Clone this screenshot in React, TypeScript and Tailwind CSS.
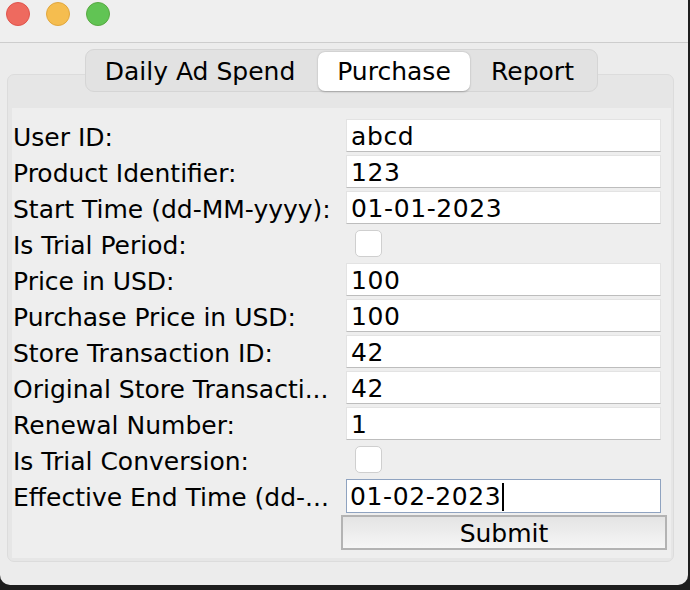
import React from "react";

const FONT = { fontFamily: '"DejaVu Sans", "Open Sans", sans-serif' };

type Row =
    | { label: string; kind: "text"; value: string; focused?: boolean }
    | { label: string; kind: "check" };

const rows: Row[] = [
    { label: "User ID:", kind: "text", value: "abcd" },
    { label: "Product Identifier:", kind: "text", value: "123" },
    { label: "Start Time (dd-MM-yyyy):", kind: "text", value: "01-01-2023" },
    { label: "Is Trial Period:", kind: "check" },
    { label: "Price in USD:", kind: "text", value: "100" },
    { label: "Purchase Price in USD:", kind: "text", value: "100" },
    { label: "Store Transaction ID:", kind: "text", value: "42" },
    { label: "Original Store Transacti...", kind: "text", value: "42" },
    { label: "Renewal Number:", kind: "text", value: "1" },
    { label: "Is Trial Conversion:", kind: "check" },
    { label: "Effective End Time (dd-...", kind: "text", value: "01-02-2023", focused: true },
];

function Field({ value, focused }: { value: string; focused?: boolean }) {
    if (focused) {
        return (
            <div className="flex h-[34px] w-[315px] items-center border-[1.5px] border-[#8fa3c0] bg-white pl-[3px] pt-[2px] text-[25px] leading-none tracking-[0.6px] text-black">
                <span>{value}</span>
                <span className="ml-[1px] h-[28px] w-[1.5px] bg-black" />
            </div>
        );
    }
    return (
        <div className="flex h-[33px] w-[315px] items-center border border-[#e3e3e3] border-b-[#bdbdbd] bg-white pl-[4px] pt-[2px] text-[25px] leading-none tracking-[0.6px] text-black">
            {value}
        </div>
    );
}

export default function App() {
    const tabs = ["Daily Ad Spend", "Purchase", "Report"];
    return (
        <div className="h-[590px] w-[690px] overflow-hidden bg-[#1e1e1e]" style={FONT}>
            <div className="flex h-[585px] w-[688px] flex-col rounded-b-[10px] bg-[#ececec]">
                {/* title bar */}
                <div className="flex h-[43px] shrink-0 items-start gap-[16px] border-b border-[#cdcdcd] bg-[#efefef] pl-[6px] pt-[2px]">
                    <span className="h-[24px] w-[24px] rounded-full border border-[#e0544c] bg-[#ee6a5f]" />
                    <span className="h-[24px] w-[24px] rounded-full border border-[#e1a73e] bg-[#f5bd4f]" />
                    <span className="h-[24px] w-[24px] rounded-full border border-[#58a942] bg-[#61c454]" />
                </div>

                <div className="relative px-[7px] pt-[31px]">
                    {/* tab strip */}
                    <div className="absolute left-[85px] top-[6px] z-10 flex h-[43px] w-[513px] items-center rounded-[9px] border border-[#d5d5d5] bg-[#e2e2e2] px-[2px] pt-[2px] text-[25px] text-black">
                        {tabs.map((t) => (
                            <div
                                key={t}
                                className={
                                    t === "Purchase"
                                        ? "flex h-[39px] w-[152px] items-center justify-center rounded-[7px] bg-white shadow-[0_0.5px_2px_rgba(0,0,0,0.25)]"
                                        : t === "Daily Ad Spend"
                                        ? "flex h-[39px] w-[230px] items-center justify-center pr-[6px]"
                                        : "flex h-[39px] flex-1 items-center justify-center"
                                }
                            >
                                {t}
                            </div>
                        ))}
                    </div>

                    {/* tab panel */}
                    <div className="h-[488px] w-[667px] rounded-[7px] border border-[#dcdcdc] bg-[#e6e6e6] pl-[4px] pr-[2px] pt-[33px]">
                        <div className="h-[450px] w-[659px] bg-[#eeeeee] pt-[11px]">
                            <div className="grid grid-cols-[333px_1fr] gap-y-[3px] pl-[1px]">
                                {rows.map((r) => (
                                    <React.Fragment key={r.label}>
                                        <div className="flex h-[33px] items-center whitespace-nowrap pt-[3px] text-[25px] leading-none text-black">
                                            {r.label}
                                        </div>
                                        <div className="flex h-[33px] items-center">
                                            {r.kind === "text" ? (
                                                <Field value={r.value} focused={r.focused} />
                                            ) : (
                                                <span className="ml-[9px] h-[27px] w-[27px] rounded-[5px] border border-[#cfcfcf] bg-white" />
                                            )}
                                        </div>
                                    </React.Fragment>
                                ))}
                                <div />
                                <div className="-ml-[5px] flex h-[35px] w-[326px] items-center justify-center border-2 border-[#b3b3b3] bg-gradient-to-b from-[#e4e4e4] to-[#f6f6f6] pt-[2px] text-[25px] leading-none text-black">
                                    Submit
                                </div>
                            </div>
                        </div>
                    </div>
                </div>
            </div>
        </div>
    );
}
